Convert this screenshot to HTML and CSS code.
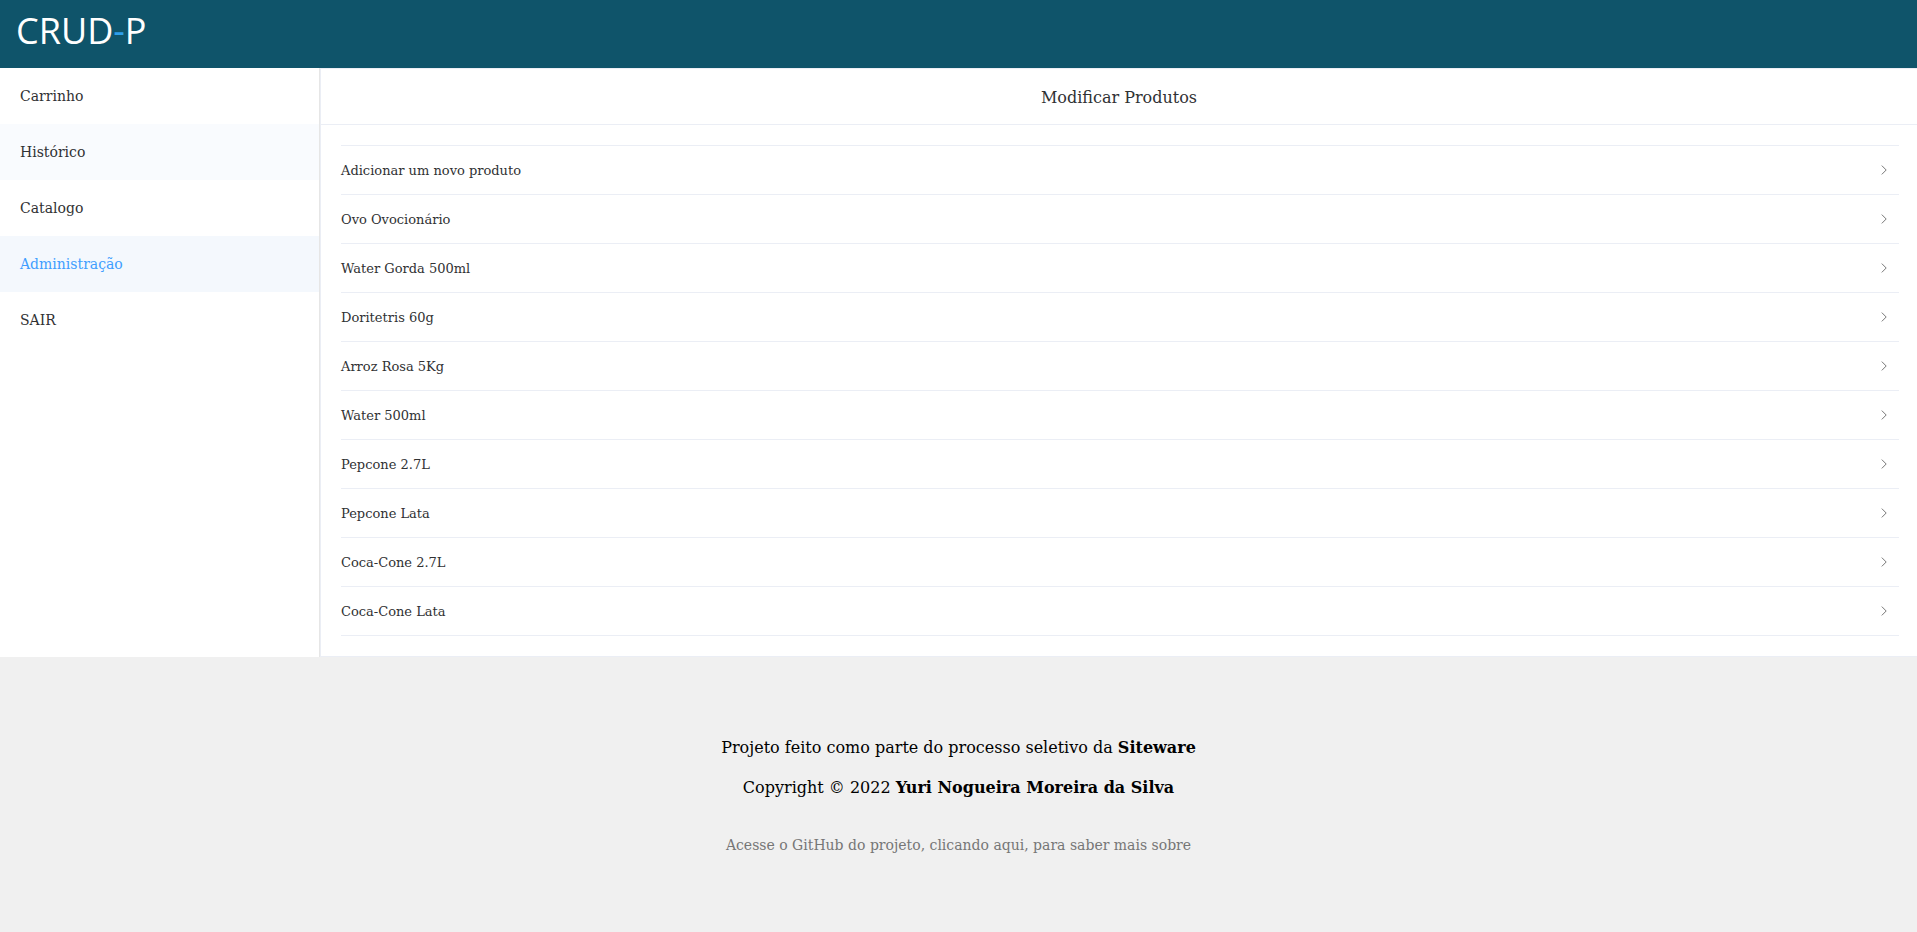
FILE: index.html
```html
<!DOCTYPE html>
<html lang="pt-BR">
<head>
<meta charset="utf-8">
<title>CRUD-P</title>
<link rel="stylesheet" href="styles.css">
</head>
<body>
<header class="topbar">
  <span class="logo">CRUD<span class="logo-dash">-</span>P</span>
</header>
<div class="layout">
  <nav class="sidebar">
    <ul class="menu">
      <li class="menu-item">Carrinho</li>
      <li class="menu-item menu-item-hover">Histórico</li>
      <li class="menu-item">Catalogo</li>
      <li class="menu-item menu-item-active">Administração</li>
      <li class="menu-item">SAIR</li>
    </ul>
  </nav>
  <main class="card">
    <div class="card-header">Modificar Produtos</div>
    <div class="card-body">
      <div class="collapse">
        <div class="collapse-row"><span>Adicionar um novo produto</span><svg class="arrow" width="6" height="10" viewBox="0 0 6 10"><path d="M0.8 0.6 L5.2 5 L0.8 9.4" fill="none" stroke="#777" stroke-width="1"/></svg></div>
        <div class="collapse-row"><span>Ovo Ovocionário</span><svg class="arrow" width="6" height="10" viewBox="0 0 6 10"><path d="M0.8 0.6 L5.2 5 L0.8 9.4" fill="none" stroke="#777" stroke-width="1"/></svg></div>
        <div class="collapse-row"><span>Water Gorda 500ml</span><svg class="arrow" width="6" height="10" viewBox="0 0 6 10"><path d="M0.8 0.6 L5.2 5 L0.8 9.4" fill="none" stroke="#777" stroke-width="1"/></svg></div>
        <div class="collapse-row"><span>Doritetris 60g</span><svg class="arrow" width="6" height="10" viewBox="0 0 6 10"><path d="M0.8 0.6 L5.2 5 L0.8 9.4" fill="none" stroke="#777" stroke-width="1"/></svg></div>
        <div class="collapse-row"><span>Arroz Rosa 5Kg</span><svg class="arrow" width="6" height="10" viewBox="0 0 6 10"><path d="M0.8 0.6 L5.2 5 L0.8 9.4" fill="none" stroke="#777" stroke-width="1"/></svg></div>
        <div class="collapse-row"><span>Water 500ml</span><svg class="arrow" width="6" height="10" viewBox="0 0 6 10"><path d="M0.8 0.6 L5.2 5 L0.8 9.4" fill="none" stroke="#777" stroke-width="1"/></svg></div>
        <div class="collapse-row"><span>Pepcone 2.7L</span><svg class="arrow" width="6" height="10" viewBox="0 0 6 10"><path d="M0.8 0.6 L5.2 5 L0.8 9.4" fill="none" stroke="#777" stroke-width="1"/></svg></div>
        <div class="collapse-row"><span>Pepcone Lata</span><svg class="arrow" width="6" height="10" viewBox="0 0 6 10"><path d="M0.8 0.6 L5.2 5 L0.8 9.4" fill="none" stroke="#777" stroke-width="1"/></svg></div>
        <div class="collapse-row"><span>Coca-Cone 2.7L</span><svg class="arrow" width="6" height="10" viewBox="0 0 6 10"><path d="M0.8 0.6 L5.2 5 L0.8 9.4" fill="none" stroke="#777" stroke-width="1"/></svg></div>
        <div class="collapse-row"><span>Coca-Cone Lata</span><svg class="arrow" width="6" height="10" viewBox="0 0 6 10"><path d="M0.8 0.6 L5.2 5 L0.8 9.4" fill="none" stroke="#777" stroke-width="1"/></svg></div>
      </div>
    </div>
  </main>
</div>
<footer class="footer">
  <p class="footer-line">Projeto feito como parte do processo seletivo da <b>Siteware</b></p>
  <p class="footer-line footer-line-2">Copyright © 2022 <b>Yuri Nogueira Moreira da Silva</b></p>
  <p class="footer-link">Acesse o GitHub do projeto, clicando aqui, para saber mais sobre</p>
</footer>
</body>
</html>
```
FILE: styles.css
```css
html, body {
  margin: 0;
  padding: 0;
}
body {
  font-family: "DejaVu Serif", serif;
  background: #f0f0f0;
  overflow: hidden;
}
.topbar {
  height: 68px;
  background: #0f546a;
  box-sizing: border-box;
  padding: 6px 0 0 16px;
}
.logo {
  font-family: "Open Sans", "Noto Sans", sans-serif;
  font-size: 36px;
  color: #ffffff;
  line-height: normal;
}
.logo-dash {
  color: #2e9fea;
}
.layout {
  display: flex;
  align-items: stretch;
}
.sidebar {
  width: 319px;
  flex: none;
  background: #ffffff;
  border-right: 1px solid #e6e6e6;
}
.menu {
  list-style: none;
  margin: 0;
  padding: 0;
}
.menu-item {
  height: 56px;
  box-sizing: border-box;
  padding: 1px 20px 0;
  line-height: 55px;
  font-size: 14px;
  color: #303133;
}
.menu-item-hover {
  background: #f9fbfe;
}
.menu-item-active {
  background: #f4f8fd;
  color: #409eff;
}
.card {
  flex: 1;
  background: #ffffff;
  border: 1px solid #ebeef5;
  border-right: none;
  min-width: 0;
}
.card-header {
  padding: 19px 20px 17px;
  line-height: 19px;
  font-size: 16px;
  color: #303133;
  text-align: center;
  border-bottom: 1px solid #ebeef5;
}
.card-body {
  padding: 20px 18px 20px 20px;
}
.collapse {
  border-top: 1px solid #ebeef5;
}
.collapse-row {
  height: 48px;
  display: flex;
  align-items: center;
  justify-content: space-between;
  font-size: 13px;
  color: #303133;
  border-bottom: 1px solid #ebeef5;
}
.arrow {
  margin-right: 12px;
  display: block;
}
.footer {
  height: 276px;
  box-sizing: border-box;
  padding-top: 81px;
  text-align: center;
  background: #f0f0f0;
}
.footer-line {
  margin: 0;
  font-size: 16px;
  line-height: 19px;
  color: #000000;
}
.footer-line-2 {
  margin-top: 21px;
}
.footer-link {
  margin: 40px 0 0;
  font-size: 14px;
  line-height: 17px;
  color: #767676;
}
```
